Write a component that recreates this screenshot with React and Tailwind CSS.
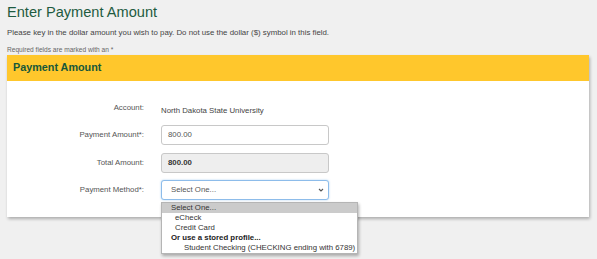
import React from 'react';

const font = { fontFamily: '"Liberation Sans", Arial, sans-serif' };

function Row({ label, children }) {
  return (
    <div className="flex items-center h-[20px]">
      <div className="w-[137px] text-right text-[7.8px] text-[#555]">{label}</div>
      <div className="ml-[17px] w-[168px] relative">{children}</div>
    </div>
  );
}

export default function App() {
  return (
    <div className="w-[597px] h-[259px] bg-[#f0f0f0] overflow-hidden px-[7px]" style={font}>
      <h1 className="text-[14.6px] leading-[25px] text-[#1e5b40]">Enter Payment Amount</h1>
      <p className="text-[7.85px] leading-[15px] text-[#444]">
        Please key in the dollar amount you wish to pay. Do not use the dollar ($) symbol in this field.
      </p>
      <p className="mt-[4px] text-[6.6px] leading-[11px] text-[#666]">Required fields are marked with an *</p>

      {/* Card */}
      <div className="w-[582px] bg-white shadow-[1px_2px_3px_rgba(0,0,0,0.28)]">
        <div className="h-[26px] bg-[#ffc72c] flex items-center px-[6px] pb-[2px]">
          <h2 className="text-[10.8px] font-bold text-[#16573a]">Payment Amount</h2>
        </div>

        <div className="flex flex-col gap-[7.5px] pt-[16.5px] pb-[16.5px]">
          <Row label="Account:">
            <span className="text-[7.8px] text-[#444]">North Dakota State University</span>
          </Row>
          <Row label="Payment Amount*:">
            <div className="h-[20px] rounded-[3px] border border-[#c8c8c8] bg-white flex items-center px-[6px] text-[7.8px] text-[#555]">
              800.00
            </div>
          </Row>
          <Row label="Total Amount:">
            <div className="h-[20px] rounded-[3px] border border-[#c8c8c8] bg-[#eeeeee] flex items-center px-[6px] text-[7.8px] font-bold text-[#333]">
              800.00
            </div>
          </Row>
          <Row label="Payment Method*:">
            <div className="h-[20px] rounded-[3px] border border-[#8dbcea] shadow-[0_0_2px_rgba(102,175,233,0.6)] bg-white flex items-center justify-between pl-[9px] pr-[4px] text-[7.8px] text-[#555]">
              <span>Select One...</span>
              <svg width="6" height="4" viewBox="0 0 6 4" fill="none">
                <path d="M1 1l2 2 2-2" stroke="#555" strokeWidth="1.1" />
              </svg>
            </div>

            {/* Open dropdown list */}
            <div className="absolute left-0 top-[22px] w-[197px] z-10 bg-white border border-[#b5b5b5] shadow-[1px_2px_3px_rgba(0,0,0,0.3)] text-[7.8px] leading-[10px] text-[#333]">
              <div className="bg-[#cbcbcb] pl-[9px]">Select One...</div>
              <div className="pl-[13px]">eCheck</div>
              <div className="pl-[13px]">Credit Card</div>
              <div className="pl-[9px] font-bold text-[#222]">Or use a stored profile...</div>
              <div className="pl-[22px] whitespace-nowrap">Student Checking (CHECKING ending with 6789)</div>
            </div>
          </Row>
        </div>
      </div>
    </div>
  );
}
